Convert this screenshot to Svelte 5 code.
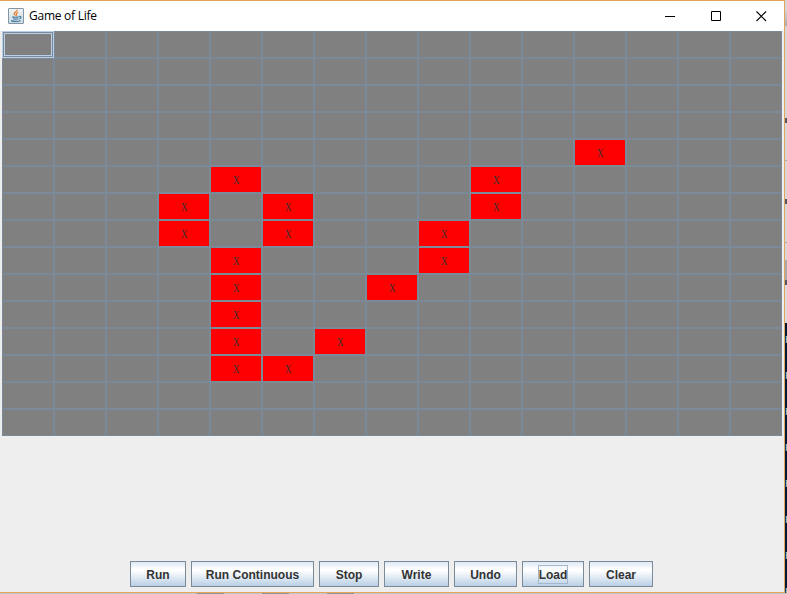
<script>
  const columns = 15;
  const alive = new Set(['4,11', '5,4', '5,9', '6,3', '6,5', '6,9', '7,3', '7,5', '7,8', '8,4', '8,8', '9,4', '9,7', '10,4', '11,4', '11,6', '12,4', '12,5']);
  const cells = Array.from({ length: 225 }, (_, i) => ({
    alive: alive.has(`${Math.floor(i / columns)},${i % columns}`),
    focused: i === 0
  }));
  const actions = [
    { label: 'Run', width: 56 },
    { label: 'Run Continuous', width: 123 },
    { label: 'Stop', width: 60 },
    { label: 'Write', width: 65 },
    { label: 'Undo', width: 63 },
    { label: 'Load', width: 62 },
    { label: 'Clear', width: 64 }
  ];
  const lines = Array.from({ length: 8 });
</script>

<div class="desktop">
  <main class="window">
    <header>
      <svg class="java" width="16" height="16" viewBox="0 0 16 16">
        <defs>
          <linearGradient id="tile" x2="0" y2="1"><stop stop-color="#f2f5f6" /><stop offset="1" stop-color="#c8d9e3" /></linearGradient>
        </defs>
        <rect x=".5" y=".5" width="15" height="15" rx=".5" fill="url(#tile)" stroke="#8296a5" />
        <path d="M9.2 1.7C9.6 3.5 5.6 4 6.2 6c.2.7.9 1 1.2 1.7M10.3 4.2C8.8 5 7.9 5.6 8.6 6.7c.2.4.1.8-.3 1.1" fill="none" stroke="#ee8130" stroke-width="1.3" />
        <path d="M4.2 8.8c1.8.5 4.7.5 6.5 0M5 10.8c1.6.5 3.7.5 5.3 0M11.2 8.5c2.5-.4 2.3 1.8.1 2.4M3.2 12.6c2.3 1.2 7 1.1 9.3-.2" fill="none" stroke="#43799f" stroke-width="1.2" />
      </svg>
      <span class="title">Game of Life</span>
      <div class="controls">
        <svg width="11" height="11" viewBox="0 0 11 11"><path d="M0 5.5h10" stroke="#000" /></svg>
        <svg width="11" height="11" viewBox="0 0 11 11"><path d="M.5.5h9v9h-9z" fill="none" stroke="#000" /></svg>
        <svg width="11" height="11" viewBox="0 0 11 11"><path d="m.5.5 9.5 9.5M10 .5.5 10" stroke="#000" stroke-width="1.1" /></svg>
      </div>
    </header>
    <section class="board">
      {#each cells as cell}
        <div class="cell" class:alive={cell.alive} class:focused={cell.focused}>
          {#if cell.alive}<span>X</span>{/if}
        </div>
      {/each}
    </section>
    <footer>
      {#each actions as action}
        <button style:width="{action.width}px"><span class:focus={action.label === 'Load'}>{action.label}</span></button>
      {/each}
    </footer>
  </main>
  <aside>
    <div class="page"><i></i><b></b><i></i><b></b><i></i></div>
    <div class="console">
      {#each lines as _}<span>P</span>{/each}
    </div>
  </aside>
  <div class="below"><i></i><i></i><i></i></div>
</div>

<style>
  .desktop {
    display: grid;
    grid-template-columns: 785px 2px;
    grid-template-rows: 593px 1px;
    width: 787px;
    height: 594px;
    overflow: hidden;
    background: #c8c8c8;
  }
  .window {
    display: flex;
    flex-direction: column;
    box-sizing: border-box;
    height: 593px;
    border: 1px solid #e2a75b;
    border-left: 0;
    background: #eee;
  }
  header {
    display: flex;
    align-items: center;
    height: 30px;
    padding: 0 17px 0 8px;
    background: #fff;
  }
  .java { display: block; margin-top: -1px; }
  .title {
    margin: 0 0 1px 5px;
    font: 12px/18px "Open Sans", "Noto Sans", sans-serif;
    letter-spacing: -.25px;
    color: #000;
    white-space: nowrap;
  }
  .controls { display: flex; gap: 34.5px; margin-left: auto; }
  .controls svg { display: block; }
  .board {
    display: grid;
    grid-template-columns: repeat(15, 52px);
    grid-auto-rows: 27px;
    width: 780px;
    margin-left: 2px;
  }
  .cell {
    display: flex;
    justify-content: center;
    align-items: center;
    box-sizing: border-box;
    border: 1px solid #7a8a99;
    background: #808080;
  }
  .alive { background: #f00; }
  .cell span {
    margin: 1px 0 0 1px;
    font: 12px/14px "Liberation Serif", serif;
    color: #333;
    transform: scaleX(.75);
  }
  .focused {
    border-color: #b8cfe5;
    box-shadow: inset 0 0 0 1px #7a8a99, inset 0 0 0 2px #b8cfe5;
  }
  footer {
    display: flex;
    gap: 5px;
    margin: auto 0 5px 130px;
  }
  button {
    display: flex;
    justify-content: center;
    align-items: center;
    box-sizing: border-box;
    height: 26px;
    padding: 0;
    border: 1px solid #7a8a99;
    background: linear-gradient(#dde8f3 0%, #fff 30%, #fff 36%, #b8cfe5 100%);
    font: bold 12px/16px "Liberation Sans", Arial, sans-serif;
    color: #333;
    white-space: nowrap;
  }
  button span { padding: 1px 0 0; }
  .focus { box-shadow: 0 0 0 1px #a3b8cc; }
  aside { height: 593px; overflow: hidden; }
  .page {
    display: flex;
    flex-direction: column;
    justify-content: space-evenly;
    box-sizing: border-box;
    height: 323px;
    padding-top: 80px;
    border-top: 0 solid;
    background: linear-gradient(#d5d5d5 0 10px, #aaa 25px, #d8d5d6 27px 260px, #aaa 260px 282px, #ddd7da 282px);
  }
  .page i { height: 5px; background: #535764; }
  .page b { height: 1px; background: #aaa; }
  .console { height: 270px; padding-top: 12px; box-sizing: border-box; background: #001635; }
  .console span {
    display: block;
    height: 36px;
    font: 11px/11px "Liberation Mono", monospace;
    color: #b7d3c6;
  }
  .below {
    display: flex;
    grid-column: 1 / 3;
    gap: 38px;
    padding-left: 197px;
    background: #c4c4c4;
  }
  .below i { width: 27px; background: #929292; }
  :global(body) { overflow: hidden; }
</style>
